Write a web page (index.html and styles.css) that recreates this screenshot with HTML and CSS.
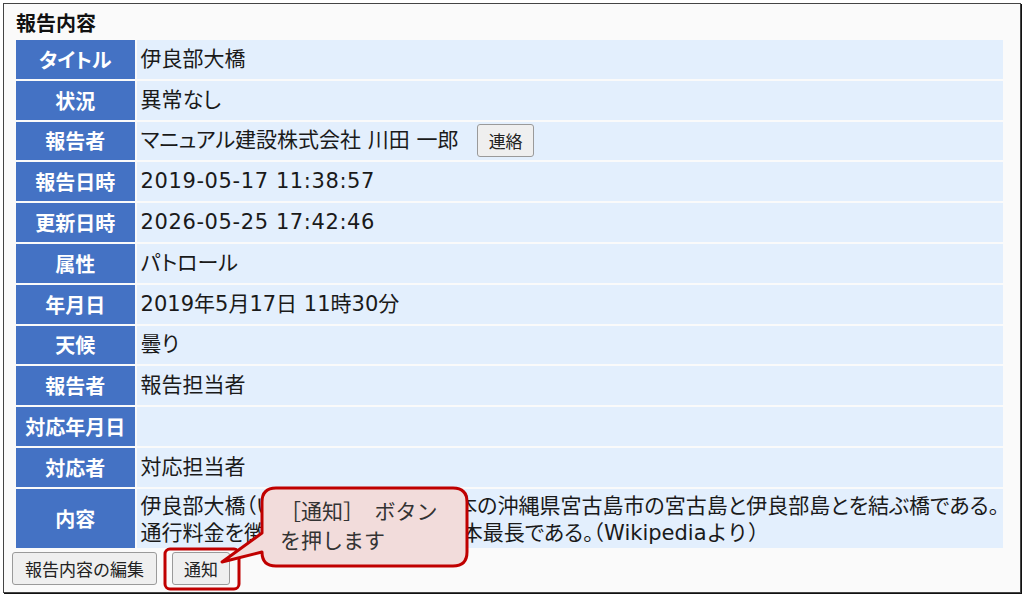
FILE: index.html
```html
<!doctype html>
<html lang="ja">
  <head>
    <meta charset="UTF-8" />
    <meta name="viewport" content="width=device-width, initial-scale=1.0" />
    <title>報告内容</title>
    <link rel="stylesheet" href="styles.css">
  </head>
  <body>
    <div class="report-panel">
      <h2 class="report-title">報告内容</h2>

      <table class="report-table">
        <tr>
          <th>タイトル</th>
          <td>伊良部大橋</td>
        </tr>
        <tr>
          <th>状況</th>
          <td>異常なし</td>
        </tr>
        <tr>
          <th>報告者</th>
          <td>
            マニュアル建設株式会社 川田 一郎
            <button class="btn btn-contact">連絡</button>
          </td>
        </tr>
        <tr>
          <th>報告日時</th>
          <td class="cell-date">2019-05-17 11:38:57</td>
        </tr>
        <tr>
          <th>更新日時</th>
          <td class="cell-date">2026-05-25 17:42:46</td>
        </tr>
        <tr>
          <th>属性</th>
          <td>パトロール</td>
        </tr>
        <tr>
          <th>年月日</th>
          <td>2019年5月17日 11時30分</td>
        </tr>
        <tr>
          <th>天候</th>
          <td>曇り</td>
        </tr>
        <tr>
          <th>報告者</th>
          <td>報告担当者</td>
        </tr>
        <tr>
          <th>対応年月日</th>
          <td></td>
        </tr>
        <tr>
          <th>対応者</th>
          <td>対応担当者</td>
        </tr>
        <tr class="row-body">
          <th>内容</th>
          <td>
            伊良部大橋（いらぶおおはし）は、日本の沖縄県宮古島市の宮古島と伊良部島とを結ぶ橋である。<br />
            通行料金を徴収しない橋としては日本最長である。<span class="source">（Wikipediaより）</span>
          </td>
        </tr>
      </table>

      <div class="report-actions">
        <button class="btn">報告内容の編集</button>
        <button class="btn btn-notify">通知</button>
      </div>
    </div>

    <!-- 操作説明の吹き出し -->
    <svg class="callout-shape" width="1024" height="597" viewBox="0 0 1024 597">
      <rect x="165" y="549" width="74" height="40" rx="5" fill="none" stroke="#c00000" stroke-width="3" />
      <path
        d="M 276 488 H 453 Q 467 488 467 502 V 552 Q 467 566 453 566 H 276 Q 262 566 262 552 L 222 562 L 262 533 V 502 Q 262 488 276 488 Z"
        fill="#f2dcdb" stroke="#c00000" stroke-width="3" stroke-linejoin="round" />
    </svg>
    <div class="callout-text">［通知］　ボタン<br />を押します</div>
  </body>
</html>
```

FILE: styles.css
```css
* {
  box-sizing: border-box;
  margin: 0;
  padding: 0;
}

body {
  position: relative;
  background-color: #ffffff;
  padding: 3px;
  font-family: "DejaVu Sans", "Noto Sans CJK JP", sans-serif;
  font-feature-settings: "palt";
  color: #1a1a1a;
}

.report-panel {
  height: 590px;
  background-color: #fafafa;
  border: 1px solid #444;
  box-shadow: 1px 1px 0 #111;
  padding: 6px 12px 6px 9px;
}

.report-title {
  font-size: 20px;
  font-weight: bold;
  line-height: 28px;
  color: #111;
  padding-left: 3px;
}

.report-table {
  width: 991px;
  margin-left: 1px;
  border-spacing: 2px;
  font-size: 21px;
}

.report-table th,
.report-table td {
  height: 38.8px;
  vertical-align: middle;
}

.report-table th {
  width: 119px;
  background-color: #4472c4;
  color: #ffffff;
  font-size: 20px;
  font-weight: bold;
  text-align: center;
  padding: 0 3px;
}

.report-table td {
  background-color: #e3effd;
  padding: 0 4px;
  line-height: 27px;
  white-space: nowrap;
}

.report-table .cell-date {
  letter-spacing: 0.6px;
}

.report-table .row-body td {
  height: 59px;
  padding-top: 4px;
}

.source {
  font-feature-settings: normal;
}

.btn {
  height: 33px;
  padding: 0 12px;
  font-family: "Noto Sans CJK JP", sans-serif;
  font-size: 17px;
  color: #222;
  background-color: #efefef;
  border: 1px solid #9a9a9a;
  border-radius: 3px;
}

.btn-contact {
  width: 57px;
  padding: 0;
  margin-left: 12px;
  vertical-align: middle;
}

.report-actions {
  display: flex;
  gap: 15px;
  margin-top: 2px;
  margin-left: -1px;
}

.btn-notify {
  width: 58px;
  padding: 0;
}

/* 吹き出しは表の上に重ねる */
.callout-shape {
  position: absolute;
  top: 0;
  left: 0;
}

.callout-text {
  position: absolute;
  left: 280px;
  top: 496px;
  font-family: "Noto Sans CJK JP", sans-serif;
  font-feature-settings: normal;
  font-size: 21px;
  line-height: 29px;
  color: #333;
}
```
